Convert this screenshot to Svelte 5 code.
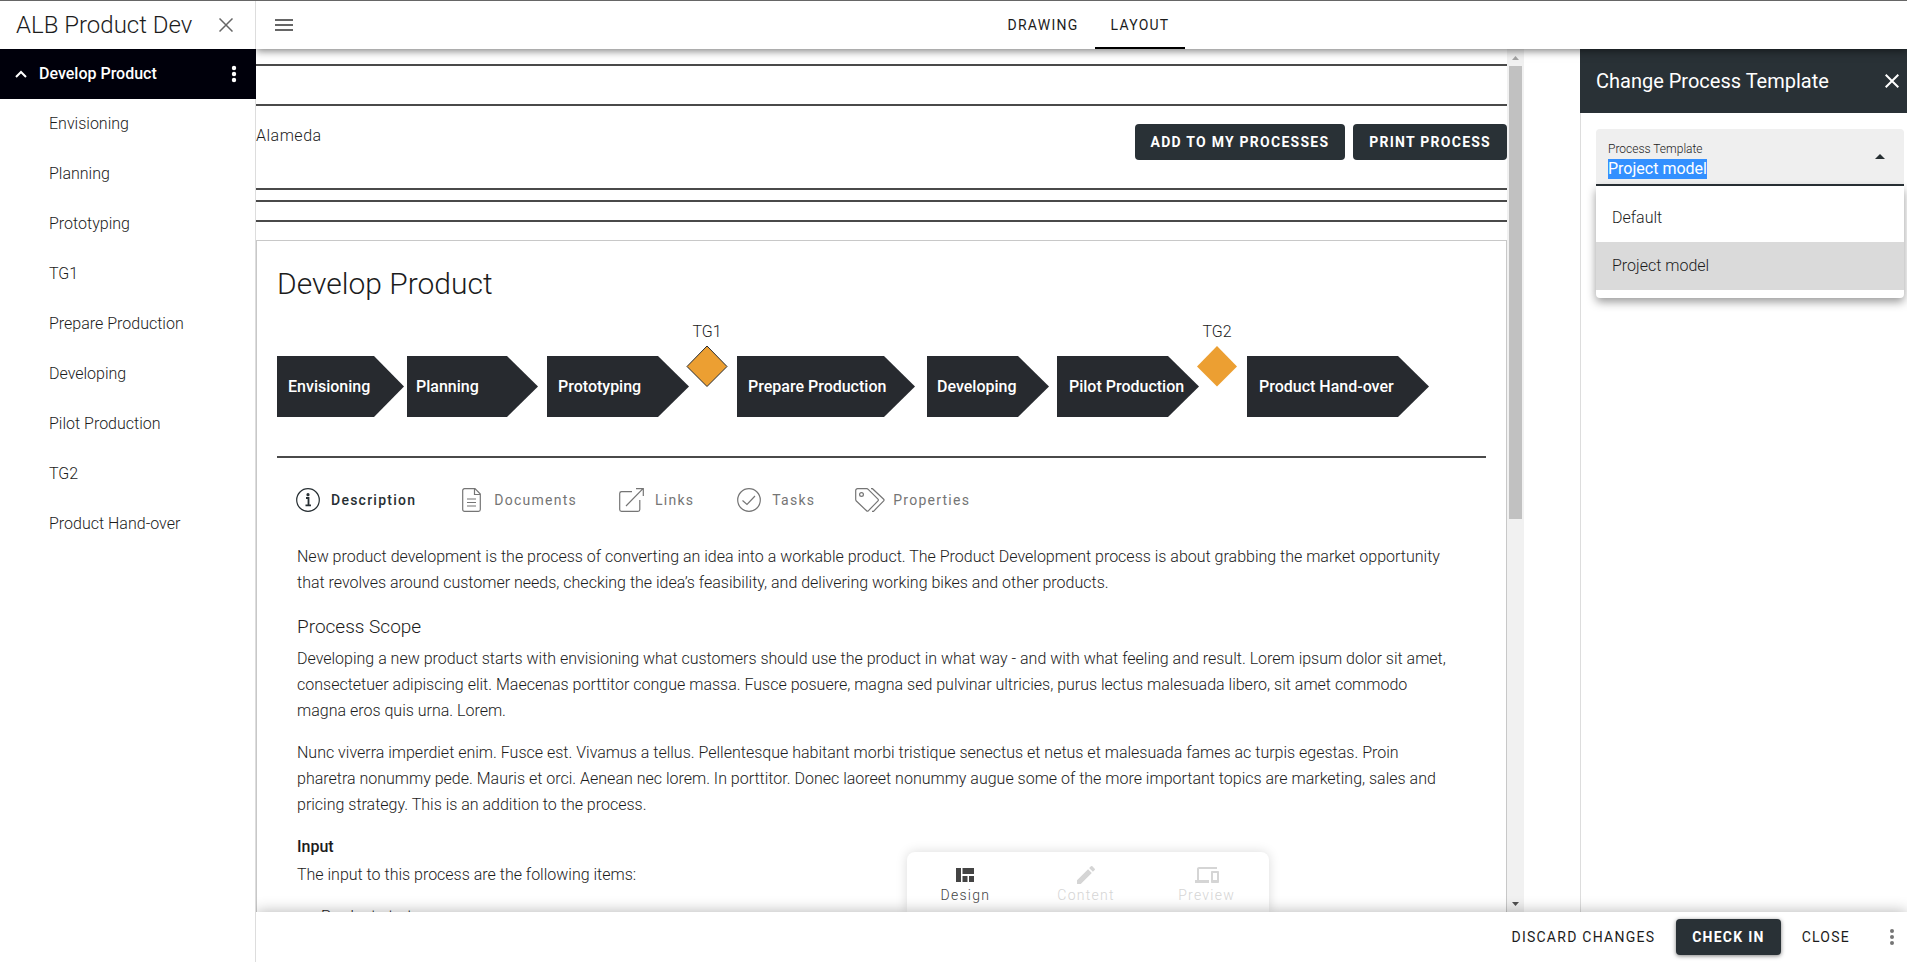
<script>
  const steps = ['Envisioning', 'Planning', 'Prototyping', 'TG1', 'Prepare Production', 'Developing', 'Pilot Production', 'TG2', 'Product Hand-over'];

  const arrows = [
    { label: 'Envisioning', x: 0, neck: 97, tip: 127, text: 11 },
    { label: 'Planning', x: 130, neck: 230, tip: 261, text: 139 },
    { label: 'Prototyping', x: 270, neck: 381, tip: 412, text: 281 },
    { label: 'Prepare Production', x: 460, neck: 607, tip: 638, text: 471 },
    { label: 'Developing', x: 650, neck: 741, tip: 772, text: 660 },
    { label: 'Pilot Production', x: 780, neck: 891, tip: 922, text: 792 },
    { label: 'Product Hand-over', x: 970, neck: 1121, tip: 1152, text: 982 }
  ];

  const gates = [
    { label: 'TG1', x: 430, outlined: true },
    { label: 'TG2', x: 940, outlined: false }
  ];

  let template = $state('Project model');
</script>

<div class="app">
  <aside class="sidebar">
    <div class="brand">
      <span>ALB Product Dev</span>
      <button class="icon" aria-label="Close navigation">
        <svg width="14" height="14" viewBox="0 0 14 14"><path d="M.5.5l13 13M13.5.5l-13 13" stroke="#666" stroke-width="1.5" fill="none" /></svg>
      </button>
    </div>
    <nav>
      <div class="root">
        <svg width="12" height="8" viewBox="0 0 12 8"><path d="M1 7l5-5 5 5" stroke="#fff" stroke-width="2" fill="none" /></svg>
        <a href="#develop">Develop Product</a>
        <button class="icon" aria-label="Process menu">
          <svg width="6" height="18" viewBox="0 0 6 18" fill="#fff"><circle cx="3" cy="3" r="2.2" /><circle cx="3" cy="9" r="2.2" /><circle cx="3" cy="15" r="2.2" /></svg>
        </button>
      </div>
      {#each steps as step}
        <a class="step" href="#{step}">{step}</a>
      {/each}
    </nav>
  </aside>

  <div class="work">
    <header>
      <button class="icon" aria-label="Menu">
        <svg width="18" height="12" viewBox="0 0 18 12" fill="#666"><path d="M0 0h18v2H0zM0 5h18v2H0zM0 10h18v2H0z" /></svg>
      </button>
      <div class="views">
        <button>DRAWING</button>
        <button class="on">LAYOUT</button>
      </div>
    </header>

    <div class="body">
      <main>
        <div class="page">
          <div class="band first"></div>
          <div class="band title">
            <span>Alameda</span>
            <div class="actions">
              <button class="solid">ADD TO MY PROCESSES</button>
              <button class="solid">PRINT PROCESS</button>
            </div>
          </div>
          <div class="band thin"></div>
          <div class="band slim"></div>

          <section class="card">
            <h1>Develop Product</h1>
            <svg class="flow" width="1160" height="100" viewBox="0 0 1160 100">
              {#each arrows as a}
                <path d="M{a.x} 36H{a.neck}L{a.tip} 66.500 {a.neck} 97H{a.x}z" fill="#272a2f" />
                <text class="arrow" x={a.text} y="72">{a.label}</text>
              {/each}
              {#each gates as g}
                <path d="M{g.x} 26l20 20.500-20 20-20-20z" fill="#ec9f32" stroke={g.outlined ? '#272a2f' : 'none'} />
                <text class="gate" x={g.x} y="17">{g.label}</text>
              {/each}
            </svg>

            <div class="tabs">
              <button class="on">
                <span class="glyph"><svg width="24" height="24" viewBox="0 0 24 24"><circle cx="12" cy="12" r="11.300" /><path d="M10 10h2.500v7M9.500 17.300h5.500" stroke-width="1.800" /><circle cx="12" cy="6.700" r="1" fill="currentColor" /></svg></span>
                Description
              </button>
              <button>
                <span class="glyph"><svg width="19" height="24" viewBox="0 0 19 24"><path d="M2.500.7H13L18.300 6v15.500a1.800 1.800 0 0 1-1.800 1.800h-14a1.800 1.800 0 0 1-1.800-1.800v-19A1.800 1.800 0 0 1 2.500.7zM12.500.7v5.800h5.800M5 11h9M5 14.500h9M5 18h9" /></svg></span>
                Documents
              </button>
              <button>
                <span class="glyph"><svg width="25" height="24" viewBox="0 0 25 24"><path d="M13 3.700H2.500A1.800 1.800 0 0 0 .7 5.500v16a1.800 1.800 0 0 0 1.800 1.800h16.500a1.800 1.800 0 0 0 1.800-1.800V12M7 18L24 .7M17 .7h7.300V8" /></svg></span>
                Links
              </button>
              <button>
                <span class="glyph"><svg width="24" height="24" viewBox="0 0 24 24"><circle cx="12" cy="12" r="11.300" /><path d="M5.500 12.500l4.500 4 8-8.500" /></svg></span>
                Tasks
              </button>
              <button>
                <span class="glyph"><svg width="30" height="24" viewBox="0 0 30 24"><path d="M.7 2.500A1.800 1.800 0 0 1 2.500.7h9.300a2 2 0 0 1 1.400.6L23 11.200a1.200 1.200 0 0 1 0 1.700l-9.700 9.900a1.200 1.200 0 0 1-1.700 0L1.300 13a2 2 0 0 1-.6-1.400zM16 .7h1.500L28.700 11.200a1.200 1.200 0 0 1 0 1.700L18.500 23.300H17" /><circle cx="6.500" cy="6.500" r="1.900" /></svg></span>
                Properties
              </button>
            </div>

            <article>
              <p>New product development is the process of converting an idea into a workable product. The Product Development process is about grabbing the market opportunity that revolves around customer needs, checking the idea’s feasibility, and delivering working bikes and other products.</p>
              <h2>Process Scope</h2>
              <p>Developing a new product starts with envisioning what customers should use the product in what way - and with what feeling and result. Lorem ipsum dolor sit amet, consectetuer adipiscing elit. Maecenas porttitor congue massa. Fusce posuere, magna sed pulvinar ultricies, purus lectus malesuada libero, sit amet commodo magna eros quis urna. Lorem.</p>
              <p>Nunc viverra imperdiet enim. Fusce est. Vivamus a tellus. Pellentesque habitant morbi tristique senectus et netus et malesuada fames ac turpis egestas. Proin pharetra nonummy pede. Mauris et orci. Aenean nec lorem. In porttitor. Donec laoreet nonummy augue some of the more important topics are marketing, sales and pricing strategy. This is an addition to the process.</p>
              <h3>Input</h3>
              <p>The input to this process are the following items:</p>
              <ul><li>Product strategy</li></ul>
            </article>
          </section>
        </div>

        <div class="scroll">
          <svg width="17" height="17" viewBox="0 0 17 17"><path d="M5 11l3.500-4 3.500 4z" fill="#a3a3a3" /></svg>
          <div class="thumb"></div>
          <svg width="17" height="17" viewBox="0 0 17 17"><path d="M5 7l3.500 4 3.500-4z" fill="#505050" /></svg>
        </div>

        <div class="modes">
          <button class="on">
            <svg width="24" height="24" viewBox="0 0 24 24" fill="currentColor"><path d="M3 5h5v14H3zM9.500 5H21v6H9.500zM9.500 13h5v6h-5zM16 13h5v6h-5z" /></svg>
            Design
          </button>
          <button disabled>
            <svg width="24" height="24" viewBox="0 0 24 24" fill="currentColor"><path d="M3 17.250V21h3.750L17.810 9.940l-3.750-3.750L3 17.250zM20.710 7.040a1 1 0 0 0 0-1.410l-2.340-2.340a1 1 0 0 0-1.410 0l-1.830 1.830 3.750 3.750 1.830-1.830z" /></svg>
            Content
          </button>
          <button disabled>
            <svg width="24" height="24" viewBox="0 0 24 24" fill="currentColor"><path d="M4 6h18V4H4c-1.100 0-2 .9-2 2v11H0v3h14v-3H4V6zm19 2h-6c-.55 0-1 .45-1 1v10c0 .55.45 1 1 1h6c.55 0 1-.45 1-1V9c0-.55-.45-1-1-1zm-1 9h-4v-7h4v7z" /></svg>
            Preview
          </button>
        </div>
      </main>

      <aside class="panel">
        <div class="panel-head">
          <h2>Change Process Template</h2>
          <button class="icon" aria-label="Close panel">
            <svg width="14" height="14" viewBox="0 0 14 14"><path d="M.7.7l12.600 12.600M13.300.7L.7 13.300" stroke="#fff" stroke-width="2" fill="none" /></svg>
          </button>
        </div>
        <div class="combo">
          <button class="field" aria-haspopup="listbox" aria-expanded="true">
            <span class="field-text">
              <span class="label">Process Template</span>
              <span class="value">{template}</span>
            </span>
            <svg width="10" height="5" viewBox="0 0 10 5"><path d="M0 5l5-5 5 5z" fill="#272f33" /></svg>
          </button>
          <div class="menu" role="listbox" aria-label="Process Template">
            {#each ['Default', 'Project model'] as option}
              <button role="option" aria-selected={option === template} class:selected={option === template} onclick={() => (template = option)}>{option}</button>
            {/each}
          </div>
        </div>
      </aside>
    </div>

    <footer>
      <button class="plain">DISCARD CHANGES</button>
      <button class="solid raised">CHECK IN</button>
      <button class="plain">CLOSE</button>
      <button class="icon" aria-label="More">
        <svg width="4" height="16" viewBox="0 0 4 16" fill="#757575"><circle cx="2" cy="2" r="2" /><circle cx="2" cy="8" r="2" /><circle cx="2" cy="14" r="2" /></svg>
      </button>
    </footer>
  </div>
</div>

<style>
  :global(body) { margin: 0; }
  .app {
    display: flex;
    box-sizing: border-box;
    height: 100vh;
    border-top: 1px solid #666;
    font: 300 16px/26px Roboto, sans-serif;
    color: #1c1c1c;
    background: #fff;
    overflow: hidden;
  }
  .app * { box-sizing: border-box; }
  button { border: 0; padding: 0; background: none; font: inherit; letter-spacing: inherit; color: inherit; cursor: pointer; }
  a { color: inherit; text-decoration: none; }
  svg { display: block; flex: none; }
  h1, h2, h3, p, ul { margin: 0; padding: 0; }

  .sidebar { flex: none; width: 256px; border-right: 1px solid #ddd; }
  .brand { display: flex; align-items: center; justify-content: space-between; height: 48px; padding: 0 22px 0 16px; font-size: 24px; }
  .root { display: flex; align-items: center; gap: 12px; height: 50px; margin-right: -1px; padding: 0 19px 0 15px; background: #00000b; color: #fff; font-weight: 500; }
  .root a { flex: 1; }
  .step { display: flex; align-items: center; height: 50px; padding-left: 49px; }

  .work { flex: 1; min-width: 0; display: flex; flex-direction: column; }
  header { position: relative; z-index: 3; flex: none; display: flex; align-items: stretch; height: 48px; padding-left: 19px; background: #fff; box-shadow: 0 2px 8px rgba(0, 0, 0, 0.5); clip-path: inset(0 0 -14px 0); }
  .views { flex: 1; display: flex; justify-content: center; padding-right: 23px; font-weight: 400; font-size: 14px; letter-spacing: 1.25px; }
  .views button { padding: 2px 16px 0; border-bottom: 2px solid transparent; }
  .views .on { border-color: #000; }

  .body { flex: 1; min-height: 0; display: flex; }
  main { position: relative; flex: 1; min-width: 0; display: flex; padding-right: 56px; }
  .page { flex: 1; min-width: 0; padding-top: 15px; overflow: hidden; }
  .band { border-top: 2px solid #4a4a4a; }
  .first { height: 40px; }
  .title { display: flex; justify-content: space-between; height: 84px; padding-top: 18px; line-height: 24px; letter-spacing: 0.5px; }
  .thin { height: 12px; }
  .slim { height: 22px; border-bottom: 2px solid #4a4a4a; }
  .actions { display: flex; gap: 8px; }
  .solid { height: 36px; padding: 0 16px; border-radius: 4px; background: #293136; color: #fff; font-size: 14px; font-weight: 700; letter-spacing: 1.25px; }

  .card { margin-top: 18px; padding: 25px 20px; border: 1px solid #c8c8c8; }
  h1 { font-size: 30px; line-height: 36px; font-weight: 300; }
  .flow { margin-top: 18px; overflow: visible; }
  .arrow { fill: #fff; font-weight: 500; }
  .gate { fill: #222; text-anchor: middle; }

  .tabs { display: flex; gap: 40px; margin-top: 36px; padding: 30px 16px 0; border-top: 2px solid #4a4a4a; font-size: 14px; line-height: 24px; font-weight: 400; letter-spacing: 1.25px; color: #757575; }
  .tabs button { display: flex; align-items: center; gap: 8px; }
  .glyph { display: flex; justify-content: center; width: 30px; }
  .tabs .on { color: #272f33; font-weight: 500; }
  .tabs svg { fill: none; stroke: currentColor; stroke-width: 1.2; }

  article { padding: 32px 26px 0 20px; }
  article p { margin-bottom: 16px; }
  article h2 { margin: 18px 0 6px; font-size: 19px; font-weight: 300; }
  h3 { margin-bottom: 2px; font-size: 16px; font-weight: 500; }
  ul { list-style: none; padding-left: 24px; }

  .scroll { flex: none; display: flex; flex-direction: column; width: 17px; background: #f1f1f1; }
  .thumb { height: 453px; margin: 0 2px auto; background: #c1c1c1; }

  .modes { position: absolute; left: 651px; bottom: 0; display: grid; grid-template-columns: repeat(3, 1fr); width: 362px; height: 60px; border-radius: 8px 8px 0 0; background: #fff; box-shadow: 0 0 12px rgba(0, 0, 0, 0.15); font-size: 14px; line-height: 16px; letter-spacing: 1.25px; }
  .modes button { display: flex; flex-direction: column; align-items: center; padding: 11px 4px 0 0; color: #d5d5d5; }
  .modes .on { color: #444; }

  .panel { flex: none; width: 327px; border-left: 1px solid #ddd; }
  .panel-head { display: flex; align-items: center; justify-content: space-between; height: 64px; margin-left: -1px; padding: 0 8px 0 16px; background: #293136; color: #fff; }
  .panel-head h2 { font-size: 20px; font-weight: 400; }
  .combo { margin: 16px 3px 0 15px; }
  .field { display: flex; align-items: center; justify-content: space-between; width: 100%; height: 57px; padding: 0 19px 0 12px; border-radius: 4px 4px 0 0; border-bottom: 2px solid #293136; background: #efefef; text-align: left; }
  .field-text { display: flex; flex-direction: column; align-items: flex-start; padding-top: 4px; }
  .label { font-size: 12px; line-height: 20px; }
  .value { line-height: 20px; font-weight: 400; background: #3390ff; color: #fff; }
  .menu { padding: 8px 0; border-radius: 0 0 4px 4px; box-shadow: 0 4px 10px rgba(0, 0, 0, 0.4); }
  .menu button { display: block; width: 100%; height: 48px; padding: 0 16px; text-align: left; }
  .menu .selected { background: #dadada; }

  footer { position: relative; z-index: 2; flex: none; display: flex; align-items: center; justify-content: flex-end; gap: 21px; height: 50px; padding-right: 13px; background: #fff; box-shadow: 0 0 14px rgba(0, 0, 0, 0.3); clip-path: inset(-16px 0 0 0); font-size: 14px; letter-spacing: 1.25px; }
  .plain { font-weight: 400; }
  .raised { box-shadow: 0 1px 4px rgba(0, 0, 0, 0.5); }
  footer .icon { margin-left: 19px; }
</style>
